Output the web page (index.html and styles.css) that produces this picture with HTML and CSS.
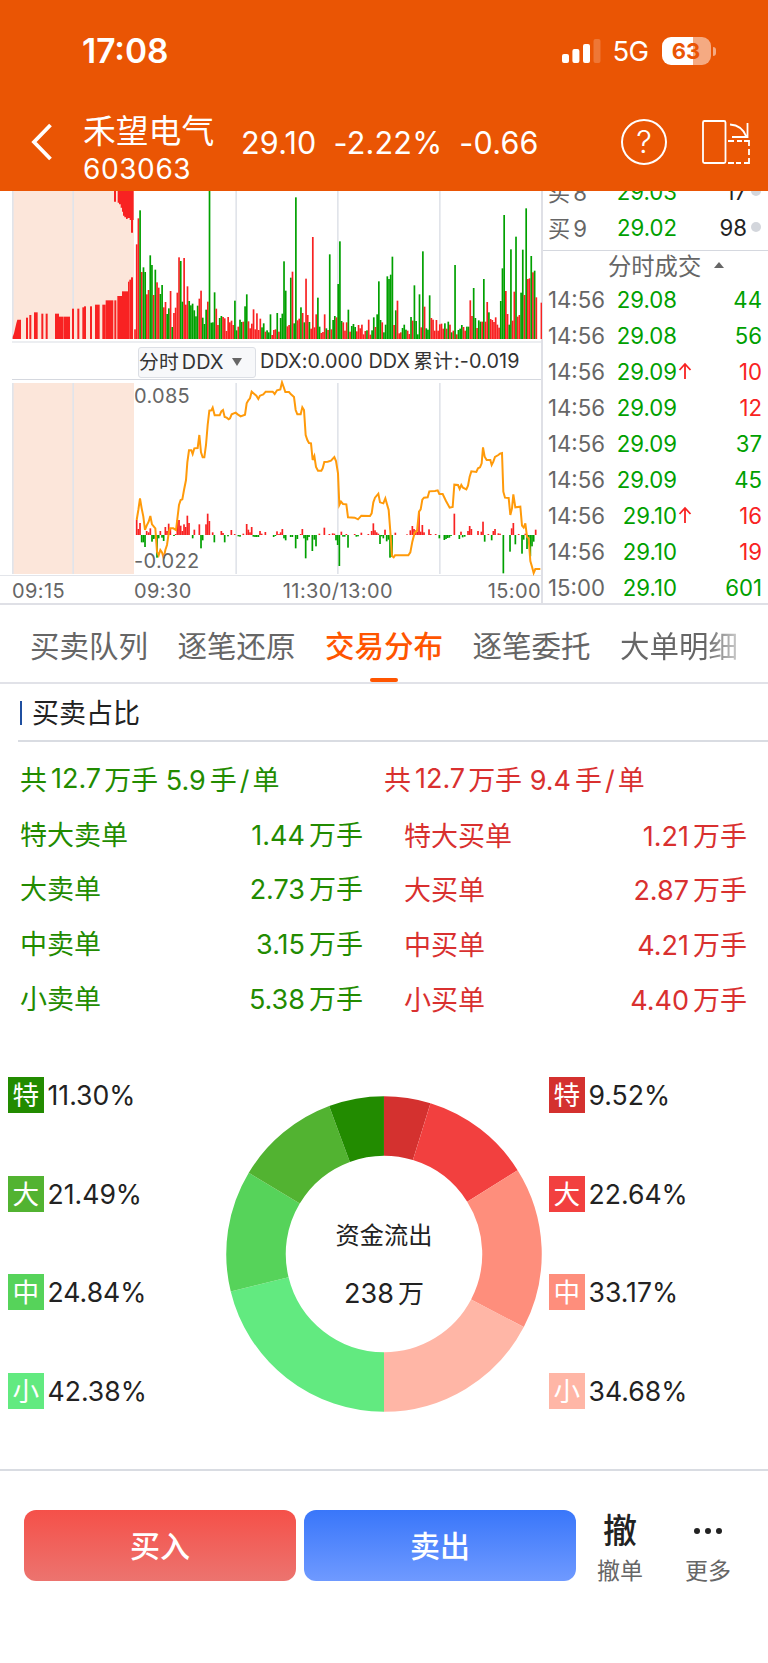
FILE: index.html
```
<!DOCTYPE html>
<html lang="zh-CN">
<head>
    <meta charset="UTF-8">
    <meta name="viewport" content="width=device-width, initial-scale=1.0">
    <title>禾望电气 603063</title>
    <link rel="stylesheet" href="styles.css">
</head>
<body>
    <header>
        <div class="status">
            <span class="clock">17:08</span>
            <svg class="signal" width="39" height="24" viewBox="0 0 39 24" fill="#fff">
                <rect x="0" y="15" width="7" height="9" rx="2"/>
                <rect x="10.4" y="10" width="7" height="14" rx="2"/>
                <rect x="21" y="5" width="7" height="19" rx="2"/>
                <rect x="31.5" y="0" width="7" height="24" rx="2" opacity=".2"/>
            </svg>
            <span class="net">5G</span>
            <span class="battery">63</span>
            <i class="nub"></i>
        </div>
        <div class="nav">
            <svg class="back" width="22" height="40" viewBox="0 0 22 40" fill="none" stroke="#fff" stroke-width="3.8">
                <path d="M19.500 3L3 20L19.500 37"/>
            </svg>
            <div class="stock">
                <span class="name">禾望电气</span>
                <span class="code">603063</span>
            </div>
            <div class="quote">
                <span>29.10</span>
                <span>-2.22%</span>
                <span>-0.66</span>
            </div>
            <div class="help">?</div>
            <svg class="rotate" width="50" height="46" viewBox="0 0 50 46" fill="none" stroke="#fff" stroke-width="1.8">
                <rect x="2" y="2" width="22.500" height="42" rx="1.500"/>
                <path d="M29 5.500C37 6 43 11 45.500 18M46.500 4V18H31"/>
                <path d="M27 22h6M36 22h5M43 22h5v5M48 30v6M48 39v5h-5M40 44h-5M33 44h-6"/>
            </svg>
        </div>
    </header>

    <main class="market">
        <section class="charts">
            <svg id="volume" class="volume" width="542" height="150" viewBox="0 18 1626 450"></svg>
            <div class="indicator">
                <span class="select">分时<u>DDX</u><i></i></span>
                <span>DDX:0.000 DDX<u>累计</u>:-0.019</span>
            </div>
            <div class="ddx">
                <svg id="ddx" width="542" height="196" viewBox="0 15 1626 588"></svg>
                <span class="max">0.085</span>
                <span class="min">-0.022</span>
            </div>
            <div class="times">
                <span>09:15</span>
                <span>09:30</span>
                <span>11:30/13:00</span>
                <span>15:00</span>
            </div>
        </section>
        <aside>
            <div class="orders">
                <div class="order"><span>买<u>8</u></span><b>29.03</b><em>17</em><i></i></div>
                <div class="order"><span>买<u>9</u></span><b>29.02</b><em>98</em><i></i></div>
            </div>
            <div class="dealTitle">分时成交<i></i></div>
            <div class="deals">
                <div class="deal"><span>14:56</span><b>29.08</b><em>44</em></div>
                <div class="deal"><span>14:56</span><b>29.08</b><em>56</em></div>
                <div class="deal up"><span>14:56</span><b>29.09</b><svg width="14" height="18" viewBox="0 0 14 18"><path d="M7 17V2M1.500 8L7 2l5.500 6"/></svg><em>10</em></div>
                <div class="deal up"><span>14:56</span><b>29.09</b><em>12</em></div>
                <div class="deal"><span>14:56</span><b>29.09</b><em>37</em></div>
                <div class="deal"><span>14:56</span><b>29.09</b><em>45</em></div>
                <div class="deal up"><span>14:56</span><b>29.10</b><svg width="14" height="18" viewBox="0 0 14 18"><path d="M7 17V2M1.500 8L7 2l5.500 6"/></svg><em>16</em></div>
                <div class="deal up"><span>14:56</span><b>29.10</b><em>19</em></div>
                <div class="deal"><span>15:00</span><b>29.10</b><em>601</em></div>
            </div>
        </aside>
    </main>

    <nav class="tabs">
        <span>买卖队列</span>
        <span>逐笔还原</span>
        <span class="active">交易分布</span>
        <span>逐笔委托</span>
        <span class="fade">大单明细</span>
    </nav>

    <h2>买卖占比</h2>

    <section class="summary">
        <div class="sell">
            <p class="total">共<u>12.7</u>万手 5.9<u>手<s>/</s>单</u></p>
            <p><span>特大卖单</span><span><u>1.44</u>万手</span></p>
            <p><span>大卖单</span><span><u>2.73</u>万手</span></p>
            <p><span>中卖单</span><span><u>3.15</u>万手</span></p>
            <p><span>小卖单</span><span><u>5.38</u>万手</span></p>
        </div>
        <div class="buy">
            <p class="total">共<u>12.7</u>万手 9.4<u>手<s>/</s>单</u></p>
            <p><span>特大买单</span><span><u>1.21</u>万手</span></p>
            <p><span>大买单</span><span><u>2.87</u>万手</span></p>
            <p><span>中买单</span><span><u>4.21</u>万手</span></p>
            <p><span>小买单</span><span><u>4.40</u>万手</span></p>
        </div>
    </section>

    <section class="ratio">
        <ul>
            <li><i class="s1">特</i>11.30%</li>
            <li><i class="s2">大</i>21.49%</li>
            <li><i class="s3">中</i>24.84%</li>
            <li><i class="s4">小</i>42.38%</li>
        </ul>
        <div class="donut">
            <svg id="donut" width="316" height="316" viewBox="-158 -158 316 316"></svg>
            <div class="flow">
                <span>资金流出</span>
                <span class="sum">238<u>万</u></span>
            </div>
        </div>
        <ul>
            <li><i class="b1">特</i>9.52%</li>
            <li><i class="b2">大</i>22.64%</li>
            <li><i class="b3">中</i>33.17%</li>
            <li><i class="b4">小</i>34.68%</li>
        </ul>
    </section>

    <footer>
        <button class="btnBuy">买入</button>
        <button class="btnSell">卖出</button>
        <div class="tool"><span class="big">撤</span><span>撤单</span></div>
        <div class="tool">
            <svg class="big" width="30" height="8" viewBox="0 0 30 8" fill="#222"><circle cx="4" cy="4" r="3"/><circle cx="15" cy="4" r="3"/><circle cx="26" cy="4" r="3"/></svg>
            <span>更多</span>
        </div>
    </footer>

    <script src="chart.js"></script>
</body>
</html>
```

FILE: styles.css
```
*{
    box-sizing: border-box;
}
body{
    margin: 0;
    width: 768px;
    height: 1663px;
    background: #fff;
    color: #222;
    font-family: Inter, "Noto Sans CJK SC", sans-serif;
    overflow: hidden;
}
b, em, i, u, s{
    font-weight: 400;
    font-style: normal;
    text-decoration: none;
}
header{
    height: 191px;
    background: #ea5504;
    color: #fff;
}
.status{
    height: 102px;
    display: flex;
    align-items: center;
    padding-left: 82px;
}
.clock{
    width: 479.500px;
    font-size: 33.500px;
    font-weight: 600;
}
.net{
    width: 49px;
    margin-left: 12px;
    font-size: 27.500px;
    font-weight: 400;
    letter-spacing: -0.6px;
}
.battery{
    width: 49px;
    height: 28px;
    border-radius: 9px;
    background: linear-gradient(90deg, #fff 63%, #f5aa82 63%);
    color: #ea5504;
    font-size: 22px;
    font-weight: 700;
    line-height: 28px;
    text-align: center;
}
.nub{
    width: 3px;
    height: 9px;
    margin-left: 2px;
    border-radius: 0 4px 4px 0;
    background: #f5aa82;
}
.nav{
    height: 89px;
    display: flex;
    align-items: center;
    padding: 0 17px 10px 31px;
}
.back{
    margin-top: 1px;
}
.stock{
    width: 158px;
    margin: 15px 0 0 30px;
    display: flex;
    flex-direction: column;
}
.name{
    font-size: 32.800px;
    line-height: 40px;
}
.code{
    font-size: 28px;
    line-height: 36px;
    letter-spacing: 0.6px;
}
.quote{
    flex: 1;
    margin-top: 2px;
    display: flex;
    gap: 17px;
    font-size: 30.500px;
    letter-spacing: 0.2px;
    white-space: nowrap;
}
.help{
    width: 46px;
    height: 46px;
    border: 2px solid #fff;
    border-radius: 50%;
    font-size: 31px;
    font-weight: 300;
    line-height: 42px;
    text-align: center;
}
.rotate{
    margin-left: 34px;
}

.market{
    height: 414px;
    display: flex;
    border-bottom: 2px solid #dfe0e6;
}
.charts{
    width: 543px;
    border-right: 2px solid #dfe0e6;
}
.charts svg{
    display: block;
}
.indicator{
    height: 39px;
    margin-left: 12px;
    padding: 4px 0 2px 126px;
    display: flex;
    align-items: flex-start;
    gap: 4px;
    border-top: 2px solid #eceef1;
    border-bottom: 1px solid #d5d8df;
    font-size: 19.800px;
    line-height: 29px;
    letter-spacing: 0.12px;
    color: #333;
    white-space: nowrap;
}
.indicator u{
    margin: 0 1px 0 3px;
}
.select{
    width: 118px;
    height: 31px;
    border: 1px solid #dcdfe5;
    border-radius: 3px;
    background: #f7f8fa;
}
.select i{
    display: inline-block;
    margin: 0 0 3px 7px;
    border: 5px solid transparent;
    border-top: 8px solid #666;
    border-bottom: 0;
}
.ddx{
    height: 196px;
    position: relative;
    border-bottom: 1px solid #e3e5ea;
    font-size: 20px;
    line-height: 24px;
    letter-spacing: 0.3px;
    color: #666;
}
.max, .min{
    position: absolute;
    left: 134px;
}
.max{
    top: 4px;
}
.min{
    bottom: 2px;
}
.times{
    height: 28px;
    padding-left: 12px;
    display: flex;
    font-size: 20px;
    line-height: 30px;
    letter-spacing: 0.4px;
    color: #666;
}
.times span:nth-child(1){
    width: 122px;
}
.times span:nth-child(2){
    width: 149px;
}
.times span:nth-child(3){
    width: 205px;
}
aside{
    flex: 1;
    font-size: 22.200px;
    overflow: hidden;
}
.orders{
    height: 60px;
    padding-left: 5px;
    display: flex;
    flex-direction: column;
    justify-content: flex-end;
    border-bottom: 1px solid #d5d8df;
}
.orders u{
    margin-left: 3px;
}
.order, .deal{
    height: 36px;
    flex: none;
    display: flex;
    align-items: center;
}
.orders .order:last-child{
    margin-bottom: 5px;
}
.order span, .deal span{
    width: 62px;
    color: #666;
}
.order b, .deal b{
    width: 67px;
    text-align: right;
    color: #00a000;
}
.order em, .deal em{
    flex: 1;
    text-align: right;
    color: #222;
}
.order i{
    width: 10px;
    height: 10px;
    margin: 0 7px 0 4px;
    border-radius: 50%;
    background: #d3d6dc;
}
.dealTitle{
    height: 30px;
    padding: 0 0 2px 65px;
    display: flex;
    align-items: center;
    font-size: 23.300px;
    color: #666;
}
.dealTitle i{
    margin-left: 13px;
    border: 5px solid transparent;
    border-top: 0;
    border-bottom: 6px solid #666;
}
.deals{
    padding-left: 5px;
}
.deal{
    padding-right: 6px;
}
.deal em{
    color: #00a000;
}
.deal.up em{
    color: #f82222;
}
.deal svg{
    width: 14px;
    margin-left: 1px;
    margin-right: -15px;
    fill: none;
    stroke: #f82222;
    stroke-width: 1.8;
}

.tabs{
    height: 79px;
    padding: 0 30px;
    display: flex;
    justify-content: space-between;
    border-bottom: 2px solid #e1e2e8;
    font-size: 29.500px;
    line-height: 82px;
    color: #666;
}
.tabs .active{
    position: relative;
    color: #ff5500;
    font-weight: 500;
}
.tabs .active::after{
    content: "";
    position: absolute;
    left: 45px;
    bottom: 0;
    width: 28px;
    height: 4px;
    border-radius: 2px;
    background: #ff5500;
}
.tabs .fade{
    background: linear-gradient(90deg, #666 72%, #ccc 100%);
    -webkit-background-clip: text;
    color: transparent;
}
h2{
    height: 58px;
    margin: 0 0 0 18px;
    padding: 0 0 2px 2px;
    display: flex;
    align-items: center;
    border-bottom: 2px solid #d9dce2;
    font-size: 27px;
    font-weight: 400;
}
h2::before{
    content: "";
    width: 2px;
    height: 24px;
    margin: 4px 10px 0 0;
    background: #1f4fa0;
}
.summary{
    height: 300px;
    padding: 9px 21px 0 20px;
    display: flex;
    justify-content: space-between;
    font-size: 27px;
}
.summary p{
    height: 54.800px;
    margin: 0;
    display: flex;
    align-items: center;
    justify-content: space-between;
}
.summary .total{
    justify-content: flex-start;
    white-space: pre;
}
.summary .total u{
    margin: 0 3px 0 4px;
}
.summary s{
    margin: 0 3px;
}
.summary span u{
    margin-right: 4px;
}
.sell{
    width: 343px;
    color: #228b00;
}
.buy{
    width: 343px;
    color: #d9302f;
}
.buy .total{
    margin-left: -20px;
    margin-bottom: 1px;
}
.ratio{
    height: 427px;
    display: flex;
    font-size: 26.600px;
}
.ratio ul{
    width: 219px;
    margin: 0;
    padding: 35px 0 0 8px;
    list-style: none;
}
.ratio ul:last-child{
    padding-left: 0;
}
.ratio li{
    height: 36px;
    margin-bottom: 62.500px;
    display: flex;
    align-items: center;
}
.ratio i{
    width: 35.500px;
    height: 36px;
    margin-right: 4px;
    line-height: 36px;
    text-align: center;
    color: #fff;
}
.s1{ background: #228b00; }
.s2{ background: #52b331; }
.s3{ background: #56d35a; }
.s4{ background: #62ea80; }
.b1{ background: #d4312f; }
.b2{ background: #f2403f; }
.b3{ background: #fe8e7c; }
.b4{ background: #ffb6a6; }
.donut{
    width: 330px;
    padding: 54px 7px 0;
    display: grid;
    align-items: start;
}
.donut svg, .flow{
    grid-area: 1 / 1;
}
.flow{
    height: 316px;
    padding-top: 111px;
    display: flex;
    flex-direction: column;
    align-items: center;
    font-size: 24.200px;
    line-height: 58px;
}
.sum{
    font-size: 27px;
}
.sum u{
    margin-left: 4px;
    font-size: 26px;
}
footer{
    height: 194px;
    padding: 39px 0 0 24px;
    display: flex;
    align-items: flex-start;
    border-top: 2px solid #d9dce2;
}
footer button{
    width: 272px;
    height: 71px;
    margin: 0 8px 0 0;
    padding: 0 0 4px;
    border: 0;
    border-radius: 12px;
    color: #fff;
    font: 500 30px Inter, "Noto Sans CJK SC", sans-serif;
}
.btnBuy{
    background: linear-gradient(#f55049, #ec746f);
}
.btnSell{
    background: linear-gradient(#3976fa, #6f9aff);
}
.tool{
    width: 88px;
    height: 76px;
    display: flex;
    flex-direction: column;
    align-items: center;
    justify-content: space-between;
    font-size: 23px;
    line-height: 30px;
    color: #666;
}
.btnSell + .tool{
    margin-left: -8px;
}
.big{
    font-size: 34px;
    line-height: 42px;
    font-weight: 500;
    color: #222;
}
svg.big{
    margin-top: 17px;
}
```

FILE: chart.js
```
const RED = "#f82222";
const GREEN = "#00a000";
const STEP = 5.08;      // 每分钟柱宽

function add(svg, tag, attrs){
    const el = document.createElementNS("http://www.w3.org/2000/svg", tag);
    for(const key in attrs){
        el.setAttribute(key, attrs[key]);
    }
    svg.appendChild(el);
}

// 集合竞价底色和网格线
function drawGrid(svg, top, bottom){
    const height = bottom - top;
    add(svg, "rect", {x: 38, y: top, width: 364, height: height, fill: "#fce6da"});
    [36, 217, 706, 1011, 1317].forEach(function(x){
        add(svg, "rect", {x: x, y: top, width: 5, height: height, fill: "#e1e4ea"});
    });
}

// 成交量
const volume = document.getElementById("volume");
const BASE = 462;
drawGrid(volume, 18, BASE);

const auction = [
    [78,6,398],[88,6,390],[102,11,382],[124,6,386],[137,6,386],[165,12,386],[177,14,395],[192,18,395],
    [216,6,371],[232,6,371],[247,5,367],[252,6,364],[270,6,364],[285,14,359],[307,10,359],[317,23,346],
    [343,6,346],[352,14,333],[366,18,319],[384,4,290],[388,5,284],[393,6,277]
];
add(volume, "path", {d: "M38 462V456L42 445L45 432L49 415L52 404H63V462Z", fill: RED});
auction.forEach(function(a){
    add(volume, "rect", {x: a[0], y: a[2], width: a[1], height: BASE - a[2], fill: RED});
});
add(volume, "path", {d: "M342 18H348V50H342ZM353 18H401V105H399V143H393V105H389V99H383V102H378V97H373V92H369V80H366V68H362V58H357V53H353Z", fill: RED});

const bars = `r29 r284 r362 g386 r201 g215 g201 r134 r147 g251 g222 r132 g208 r170 r154 g135 g162 r95 r111 g75
g92 r144 g36 r78 r94 r139 r245 g234 g112 r243 r103 r158 g114 g101 g106 g86 g68 g100 r121 r145
g64 g45 g88 r112 g450 g49 g50 g140 r91 r42 g63 g69 r66 r62 r24 r66 r50 r55 r42 g115
g26 r37 g58 g51 r52 g98 g134 r53 r32 r46 r89 r29 r77 r27 r61 g35 g47 r22 g26 g20
g74 r12 r27 r29 g78 r22 g63 g76 g233 g145 r38 r42 g184 r202 g47 g425 r56 r61 g95 r78
g50 r181 r72 g51 r31 r306 r35 r74 g124 g37 r18 r21 r74 g32 r27 g254 r29 g57 g69 r65
g165 g293 g54 r50 r25 r50 g88 r22 g39 g45 g36 r23 r42 r32 r43 r14 r24 g26 r58 r13
g26 g65 r36 g74 g173 g57 r50 g20 g43 g188 g180 g193 g247 r42 g86 r115 r17 r20 g33 g43
g28 r25 r15 g66 r55 g161 g54 g14 g134 r35 g263 r97 g32 g28 g131 r63 r58 r25 r57 r25
r44 r46 r31 g47 r31 g52 r43 g20 r25 g222 r14 g27 g31 g42 r36 r25 g37 g37 r116 r69
g153 g63 r33 g56 g52 r52 g180 r52 r111 g80 r60 r57 r51 r65 r43 r34 g114 g212 g372 r144
r75 g43 g269 r55 r142 g307 r67 r72 g139 g268 r132 g392 r180 r182 g249 r200 g205 r125 r0 r0 r109`.split(/\s+/);
bars.forEach(function(bar, i){
    const h = Number(bar.slice(1));
    add(volume, "rect", {x: 402.500 + i * STEP, y: BASE - h, width: STEP, height: h, fill: bar[0] == "r" ? RED : GREEN});
});

// DDX
const ddx = document.getElementById("ddx");
const ZERO = 480;
drawGrid(ddx, 24, 597);

const ddxBars = [
    410,45,415,18,420,36,425,-22,430,-22,435,-36,440,12,446,8,451,20,456,-20,461,-12,466,-10,471,-68,476,-10,481,12,486,-8,
    491,-18,496,24,501,12,506,34,511,18,522,-3,527,3,532,45,537,45,542,28,547,12,552,32,557,24,562,58,567,36,578,-10,583,16,
    598,32,603,-40,608,-16,618,32,623,64,628,42,638,8,643,-22,664,12,669,6,674,-22,684,-4,694,15,704,3,715,-4,720,-5,730,4,
    740,33,745,16,750,8,755,24,760,-5,765,-6,770,-6,775,-6,780,12,785,4,796,9,821,-6,826,-3,831,11,837,3,842,8,847,18,
    852,-10,857,-16,872,-6,877,-6,887,-40,892,-12,902,3,907,18,912,-10,917,-70,922,-16,927,-6,937,-48,943,-14,948,-34,
    958,4,973,22,988,3,998,5,1003,4,1008,-16,1013,-30,1018,-93,1024,10,1029,-5,1034,-5,1039,3,1044,-38,1064,3,1069,-5,
    1074,-4,1084,7,1105,3,1115,12,1120,35,1125,14,1130,8,1135,4,1140,-27,1145,-4,1150,-10,1155,16,1160,-19,1165,-14,
    1170,-68,1176,-66,1186,7,1221,2,1231,14,1237,27,1242,18,1247,14,1252,10,1257,70,1262,10,1267,30,1272,8,1287,17,1292,3,
    1307,3,1318,-10,1333,-15,1338,-12,1343,-9,1348,-8,1353,-3,1363,64,1378,-12,1383,10,1388,-7,1394,-5,1404,12,1409,27,
    1414,18,1434,12,1444,10,1449,40,1454,-20,1465,3,1475,-16,1480,12,1485,18,1495,5,1500,4,1510,-115,1530,-50,1535,20,
    1540,36,1546,-28,1556,3,1566,-56,1571,-14,1576,4,1581,-42,1586,-10,1591,-64,1596,-34,1601,-20,1607,16
];
for(let i = 0; i < ddxBars.length; i += 2){
    const v = ddxBars[i + 1];
    add(ddx, "rect", {x: ddxBars[i] - 2.5, y: v > 0 ? ZERO - v : ZERO, width: STEP, height: Math.abs(v), fill: v > 0 ? RED : GREEN});
}

const line = `410,435 415,405 420,370 425,400 430,425 435,465 440,452 446,440 451,423 456,448 466,460 471,530 476,541 481,525
486,532 491,550 496,525 501,510 506,475 510,460 520,460 528,465 532,432 537,390 542,375 547,373 552,345 558,315 562,262
567,226 574,226 578,237 583,220 593,219 598,180 603,232 608,247 613,247 618,210 623,150 628,107 634,106 638,98 644,121
659,121 664,109 669,105 674,126 680,128 686,133 690,130 695,118 707,113 713,118 722,124 735,119 740,85 745,76 750,70
755,50 762,56 769,62 775,72 780,62 790,58 797,50 818,50 824,57 831,46 841,43 846,22 851,36 856,51 867,51 873,58 882,66
887,105 892,118 902,118 907,97 912,105 917,180 922,195 927,204 933,205 938,255 943,243 948,276 954,287 964,287 968,280
973,261 983,260 993,257 1003,246 1008,258 1014,295 1018,390 1023,380 1029,387 1039,388 1044,427 1064,428 1074,433
1084,422 1110,423 1115,415 1120,382 1125,368 1135,356 1140,382 1150,385 1156,370 1161,388 1166,405 1171,470 1176,543
1181,547 1185,541 1225,541 1231,532 1237,500 1244,473 1251,468 1257,410 1262,403 1267,374 1272,368 1283,367 1288,349
1305,348 1313,346 1318,357 1328,357 1338,378 1349,398 1358,396 1363,329 1374,330 1379,342 1384,330 1389,338 1399,343
1404,332 1409,305 1414,289 1429,291 1434,280 1440,277 1445,265 1449,217 1454,245 1460,255 1471,255 1475,270 1480,260
1485,246 1495,240 1500,236 1506,234 1510,350 1515,368 1526,369 1531,420 1536,400 1540,358 1546,397 1561,395 1566,452
1571,458 1576,445 1581,485 1586,490 1591,558 1596,575 1601,594 1606,582 1621,582`;
add(ddx, "polyline", {points: line, fill: "none", stroke: "#ff9a0a", "stroke-width": 6});

// 资金分布环形图, 从顶部顺时针
const donut = document.getElementById("donut");
const parts = [
    [9.52, "#d4312f"], [22.64, "#f2403f"], [33.17, "#fe8e7c"], [34.67, "#ffb6a6"],
    [42.37, "#62ea80"], [24.84, "#56d35a"], [21.49, "#52b331"], [11.30, "#228b00"]
];
let start = 0;
parts.forEach(function(part){
    add(donut, "circle", {
        r: 128, fill: "none", stroke: part[1], "stroke-width": 59.5, pathLength: 200,
        "stroke-dasharray": part[0] + " 200", transform: `rotate(${start * 1.8 - 90})`
    });
    start += part[0];
});
```
